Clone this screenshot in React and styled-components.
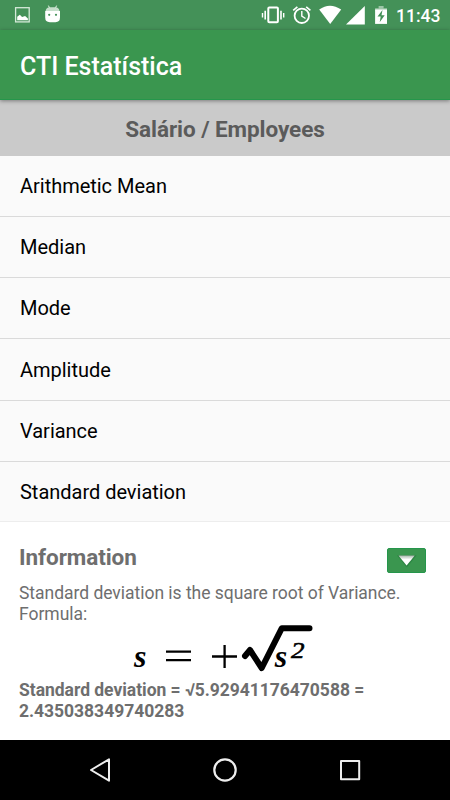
import React from "react";
import styled, { createGlobalStyle } from "styled-components";

const GlobalStyle = createGlobalStyle`
  * {
    box-sizing: border-box;
  }

  body {
    margin: 0;
    font-family: Roboto, sans-serif;
    background-color: #ffffff;
  }

  svg {
    display: block;
    flex: none;
  }
`;

const Screen = styled.div`
  width: 450px;
  height: 800px;
  display: flex;
  flex-direction: column;
  overflow: hidden;
`;

const StatusBar = styled.div`
  height: 30px;
  flex: none;
  display: flex;
  background-color: #449158;
`;

const Clock = styled.span`
  width: 55px;
  padding-left: 1px;
  font-size: 17.5px;
  font-weight: 500;
  line-height: 32px;
  color: #ffffff;
`;

const AppBar = styled.header`
  position: relative;
  height: 70px;
  flex: none;
  display: flex;
  align-items: center;
  padding: 4px 20px 0;
  background-color: #3a964f;
  border-bottom: 1px solid #25964b;
  box-shadow: 0 1px 4px rgba(0, 0, 0, 0.4);
`;

const Title = styled.h1`
  margin: 0;
  font-size: 25px;
  font-weight: 500;
  color: #ffffff;
`;

const Subtitle = styled.h2`
  height: 55.5px;
  flex: none;
  margin: 0;
  padding-top: 2px;
  font-size: 22.5px;
  font-weight: 700;
  line-height: 55px;
  letter-spacing: -0.06px;
  text-align: center;
  color: #5b5b5b;
  background-color: #cacaca;
`;

const List = styled.ul`
  height: 366px;
  flex: none;
  margin: 0;
  padding: 0;
  list-style: none;
  overflow: hidden;
  background-color: #fafafa;
  border-bottom: 1px solid #ededed;
`;

const ListItem = styled.li`
  height: 61.25px;
  padding: 0.4px 20px 0;
  font-size: 20px;
  line-height: 61px;
  letter-spacing: -0.02px;
  color: #000000;
  border-bottom: 1px solid #dadada;
`;

const InfoPanel = styled.section`
  flex: 1;
  padding: 22.5px 19px 0;
  color: #6e6e6e;
  background-color: #ffffff;
`;

const InfoHeader = styled.div`
  height: 39px;
  display: flex;
  justify-content: space-between;
  padding-right: 5px;
`;

const InfoTitle = styled.h3`
  margin: 0;
  font-size: 22.5px;
  font-weight: 700;
  line-height: 27px;
  letter-spacing: -0.08px;
`;

const CollapseButton = styled.button`
  width: 39px;
  height: 25px;
  margin-top: 4px;
  padding: 0;
  background-color: #3a964f;
  border: 1px solid #25964b;
  border-radius: 2px;
`;

const InfoText = styled.p`
  margin: 0;
  font-size: 17.5px;
  font-weight: ${(props) => (props.$bold ? 700 : 400)};
  line-height: 20.5px;
  letter-spacing: -0.03px;
`;

const FormulaWrapper = styled.div`
  height: 56px;
  margin: 0 -19px;
`;

const NavBar = styled.nav`
  height: 60px;
  flex: none;
  background-color: #000000;
`;

const measures = [
  "Arithmetic Mean",
  "Median",
  "Mode",
  "Amplitude",
  "Variance",
  "Standard deviation",
];

const NotificationIcons = () => (
  <svg width="70" height="30" viewBox="0 0 70 30">
    <rect x="15.6" y="7.7" width="13.6" height="14.2" fill="none" stroke="#d5ead9" strokeWidth="1.3" />
    <path d="M17.2 20.2v-3.4l2.6-2 2.3 2.3 3-1 2.8 2.5v1.6z" fill="#ffffff" />
    <path d="M48.4 5.6l2 4M56.6 5.6l-2 4" stroke="#e6f2e8" strokeWidth="1" />
    <path d="M45.6 11q.7-3.7 4-3.7h5.9q3.3 0 4 3.7z" fill="#c6dfcb" />
    <path d="M45.2 11h14.8v6.6q0 4.6-4.6 4.6h-5.6q-4.6 0-4.6-4.6z" fill="#ffffff" />
    <circle cx="49.2" cy="14.8" r="1.1" fill="#449158" />
    <circle cx="56" cy="14.8" r="1.1" fill="#449158" />
  </svg>
);

const SystemIcons = () => (
  <svg width="325" height="30" viewBox="70 0 325 30">
    <g fill="none" stroke="#ffffff">
      <rect x="268.3" y="7.6" width="9.6" height="14.6" rx="1" strokeWidth="2" />
      <path d="M265.2 10.8v8.8M281 10.8v8.8" strokeWidth="1.6" />
      <path d="M262.5 13v4.4M283.7 13v4.4" strokeWidth="1.4" />
      <circle cx="301.8" cy="15.8" r="7.2" strokeWidth="1.8" />
      <path d="M301.8 11v5.2l3.7 2.3" strokeWidth="1.4" />
      <path d="M293.2 10.4l4.2-3.5M310.4 10.4l-4.2-3.5" strokeWidth="1.7" />
    </g>
    <path d="M319.2 9.6Q329.8 2 341.2 9.6L330.2 24z" fill="#ffffff" />
    <path d="M364.8 6v18.5H346z" fill="#ffffff" />
    <path d="M378.6 6h5v2.2h3.4v2.6h-11.9V8.2h3.5z" fill="#9dc6a7" />
    <path d="M375.1 9.5h11.9v14.4h-11.9z" fill="#ffffff" />
    <path d="M382.5 10l-5 6.6h3.2l-1 5.7 5-7h-3.2z" fill="#449158" />
  </svg>
);

const ArrowIcon = () => (
  <svg width="37" height="23" viewBox="0 0 37 23">
    <defs>
      <linearGradient id="arrowFill" x1="0" y1="0" x2="0" y2="1">
        <stop offset="0" stopColor="#a9b8ad" />
        <stop offset="0.4" stopColor="#ffffff" />
      </linearGradient>
    </defs>
    <path d="M9 6.6h19.6l-9.8 11.8z" fill="#176d30" opacity="0.35" />
    <path d="M9.6 6.1h18.2l-9.1 11z" fill="#28773c" opacity="0.6" />
    <path d="M10.4 6.6h16.4l-8.2 9.8z" fill="url(#arrowFill)" />
  </svg>
);

const Formula = () => (
  <svg width="450" height="56" viewBox="0 623 450 56">
    <g fontFamily="Liberation Serif, serif" fontStyle="italic" fontWeight="700" fill="#000000">
      <text x="134" y="666" fontSize="32">s</text>
      <text x="274.7" y="666" fontSize="32">s</text>
      <text x="291" y="656.5" fontSize="23" fontWeight="400" stroke="#000000" strokeWidth="0.6" textLength="13.5" lengthAdjust="spacingAndGlyphs">
        2
      </text>
    </g>
    <path d="M166 650.6h25M166 659.2h25M212 655.5h25M224.6 644v23" stroke="#000000" strokeWidth="2.3" />
    <path
      d="M245 655l5-6 11.7 18 20-39.7h27.8"
      fill="none"
      stroke="#000000"
      strokeWidth="6"
      strokeLinecap="round"
      strokeLinejoin="round"
    />
  </svg>
);

const NavIcons = () => (
  <svg width="450" height="60" viewBox="0 740 450 60">
    <g fill="none" stroke="#eeeeee" strokeWidth="2" strokeLinejoin="round">
      <path d="M109 759.3v21.4L91 770z" />
      <circle cx="225" cy="770" r="10.7" strokeWidth="2.2" />
      <rect x="341" y="761" width="18.2" height="18.2" />
    </g>
  </svg>
);

const App = () => {
  return (
    <>
      <GlobalStyle />
      <Screen>
        <StatusBar>
          <NotificationIcons />
          <SystemIcons />
          <Clock>11:43</Clock>
        </StatusBar>
        <AppBar>
          <Title>CTI Estatística</Title>
        </AppBar>
        <Subtitle>Salário / Employees</Subtitle>
        <List>
          {measures.map((name) => (
            <ListItem key={name}>{name}</ListItem>
          ))}
        </List>
        <InfoPanel>
          <InfoHeader>
            <InfoTitle>Information</InfoTitle>
            <CollapseButton>
              <ArrowIcon />
            </CollapseButton>
          </InfoHeader>
          <InfoText>
            Standard deviation is the square root of Variance.
            <br />
            Formula:
          </InfoText>
          <FormulaWrapper>
            <Formula />
          </FormulaWrapper>
          <InfoText $bold>
            Standard deviation = √5.92941176470588 =
            <br />
            2.435038349740283
          </InfoText>
        </InfoPanel>
        <NavBar>
          <NavIcons />
        </NavBar>
      </Screen>
    </>
  );
};

export default App;
